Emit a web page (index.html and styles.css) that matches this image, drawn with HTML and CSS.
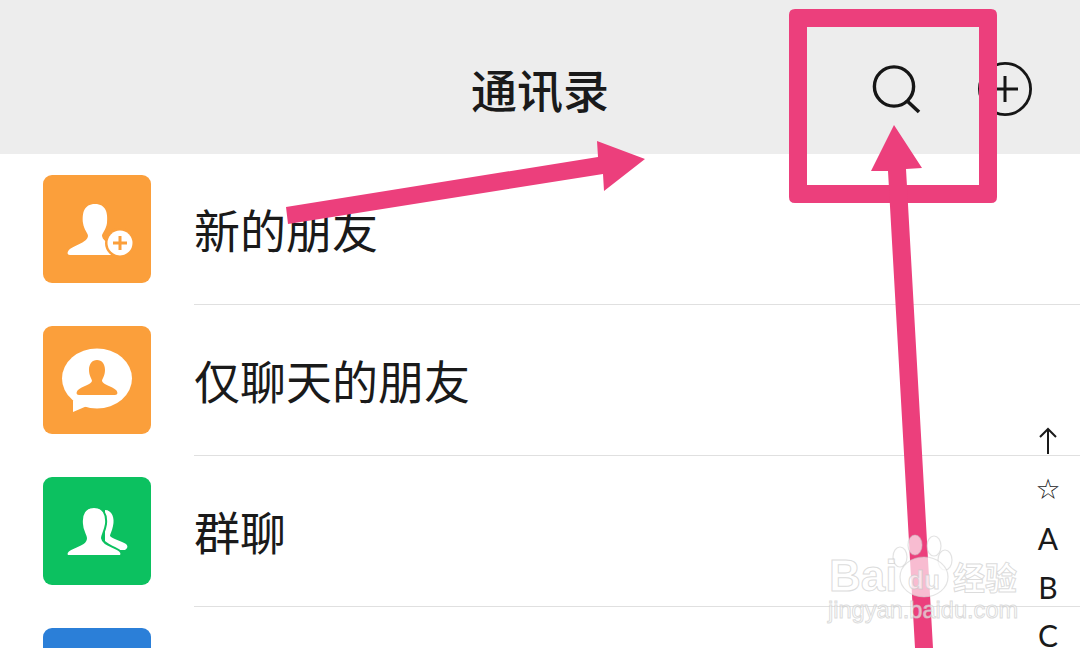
FILE: index.html
```html
<!DOCTYPE html>
<html lang="zh-CN">
<head>
    <meta charset="utf-8">
    <title>通讯录</title>
    <link rel="stylesheet" href="styles.css">
</head>
<body>
    <div class="header">
        <div class="headerSide"></div>
        <div class="title">通讯录</div>
        <div class="headerSide headerActions">
            <svg class="searchIcon" width="50" height="50" viewBox="0 0 50 50">
                <circle cx="23" cy="22.5" r="19.6" fill="none" stroke="#161616" stroke-width="3.4"/>
                <path d="M37 37.7 L48 48" fill="none" stroke="#161616" stroke-width="3.6"/>
            </svg>
            <svg class="plusIcon" width="56" height="56" viewBox="0 0 56 56">
                <circle cx="28" cy="28" r="25.6" fill="none" stroke="#161616" stroke-width="2.8"/>
                <path d="M28 15 V41 M15 28 H41" fill="none" stroke="#161616" stroke-width="3"/>
            </svg>
        </div>
    </div>

    <div class="list">
        <div class="row">
            <svg class="rowIcon" width="108" height="108" viewBox="0 0 108 108">
                <rect width="108" height="108" rx="9" fill="#fb9f3b"/>
                <path d="M27 80 C24 80 24 77 26 75 C31 70 44 68 45 61 C45 58 41 55 40 48 C39 38 41 29 52 29 C63 29 65 38 64 48 C63 55 59 58 59 61 C60 68 73 71 78 75 C80 77 80 80 77 80 Z" fill="#fff"/>
                <circle cx="77" cy="68" r="15" fill="#fb9f3b"/>
                <circle cx="77" cy="68" r="12.5" fill="#fff"/>
                <path d="M77 61 V75 M70 68 H84" fill="none" stroke="#fb9f3b" stroke-width="3"/>
            </svg>
            <div class="rowText">新的朋友</div>
        </div>
        <div class="row">
            <svg class="rowIcon" width="108" height="108" viewBox="0 0 108 108">
                <rect width="108" height="108" rx="9" fill="#fb9f3b"/>
                <path d="M30 86 L30 74 L44 80 Z" fill="#fff"/>
                <ellipse cx="54" cy="52.5" rx="35" ry="30" fill="#fff"/>
                <path d="M36 69 C33 69 33 66 35 64 C39 60 48 59 49 55 C49 53 46 50 46 44 C46 38 49 34 54 34 C59 34 62 38 62 44 C62 50 59 53 59 55 C60 59 69 60 73 64 C75 66 75 69 72 69 Z" fill="#fb9f3b"/>
            </svg>
            <div class="rowText">仅聊天的朋友</div>
        </div>
        <div class="row">
            <svg class="rowIcon" width="108" height="108" viewBox="0 0 108 108">
                <rect width="108" height="108" rx="9" fill="#0cc160"/>
                <path d="M62 33 C69 33 72 41 70 49 C69 54 67 57 67 59 C69 62 79 64 83 67 C85 69 85 71 82 73 L62 73 Z" fill="#fff"/>
                <path d="M26 79 C23 79 23 76 25 74 C31 69 43 68 43 61 C43 58 39 54 39 47 C38 37 42 30 51 30 C60 30 64 37 63 47 C62 54 59 58 59 61 C60 68 71 69 77 74 C79 76 79 79 76 79 Z" fill="#fff" stroke="#0cc160" stroke-width="2"/>
            </svg>
            <div class="rowText">群聊</div>
        </div>
        <div class="row">
            <svg class="rowIcon" width="108" height="108" viewBox="0 0 108 108">
                <rect width="108" height="108" rx="9" fill="#2b7fd8"/>
            </svg>
            <div class="rowText"></div>
        </div>
    </div>

    <div class="letterIndex">
        <div class="indexItem">
            <svg width="20" height="28" viewBox="0 0 20 28">
                <path d="M10 27 V2 M2 10 L10 2 L18 10" fill="none" stroke="#1a1a1a" stroke-width="2"/>
            </svg>
        </div>
        <div class="indexItem star">☆</div>
        <div class="indexItem">A</div>
        <div class="indexItem">B</div>
        <div class="indexItem">C</div>
    </div>

    <svg class="marks" width="1080" height="648" viewBox="0 0 1080 648">
        <path fill="#ec3f7c" fill-rule="evenodd" d="M795 9 H991 Q997 9 997 15 V197 Q997 203 991 203 H795 Q789 203 789 197 V15 Q789 9 795 9 Z M807 27 V185 H979 V27 Z"/>
        <path fill="#ec3f7c" d="M286 207 L598 157 L597 141 L645 159 L604 191 L603 174 L288 224 Z"/>
        <path fill="#ec3f7c" d="M894 125 L922 168 L906 169 L933 648 L915 648 L888 171 L871 171 Z"/>
    </svg>

    <div class="watermark">
        <svg class="paw" width="1080" height="648" viewBox="0 0 1080 648">
            <g fill="#fff" fill-opacity="0.65" stroke="#c8c8c8" stroke-opacity="0.5" stroke-width="1.2">
                <ellipse cx="915" cy="545" rx="7" ry="10"/>
                <ellipse cx="934" cy="546" rx="7" ry="10"/>
                <ellipse cx="900" cy="557" rx="7" ry="10"/>
                <ellipse cx="945" cy="560" rx="7" ry="10"/>
                <ellipse cx="924" cy="577" rx="24" ry="20"/>
            </g>
        </svg>
        <span class="wmBai">Bai</span>
        <span class="wmDu">du</span>
        <span class="wmJy">经验</span>
        <span class="wmUrl">jingyan.baidu.com</span>
    </div>
</body>
</html>
```

FILE: styles.css
```css
body {
    margin: 0;
    width: 1080px;
    height: 648px;
    overflow: hidden;
    position: relative;
    background-color: #fff;
    color: #1a1a1a;
    font-family: "Noto Sans CJK SC", "Noto Sans", sans-serif;
}

.header {
    box-sizing: border-box;
    height: 154px;
    padding-top: 22px;
    background-color: #ededed;
    display: grid;
    grid-template-columns: 1fr auto 1fr;
    align-items: center;
}

.title {
    font-size: 46px;
    font-weight: 500;
    line-height: 60px;
}

.headerActions {
    display: flex;
    justify-content: flex-end;
    align-items: center;
    gap: 56px;
    padding-right: 47px;
    margin-top: 2px;
}

.list {
    display: flex;
    flex-direction: column;
}

.row {
    height: 151px;
    display: flex;
    flex-shrink: 0;
    gap: 43px;
    padding-left: 43px;
}

.rowIcon {
    margin-top: 21px;
    flex-shrink: 0;
}

.rowText {
    flex: 1;
    height: 150px;
    border-bottom: 1px solid #e0e0e0;
    font-size: 46px;
    line-height: 148px;
}

.letterIndex {
    position: absolute;
    top: 417px;
    right: 14px;
    width: 36px;
    display: flex;
    flex-direction: column;
    align-items: center;
    font-family: "Lato", sans-serif;
    font-size: 30px;
    color: #1a1a1a;
}

.indexItem {
    height: 48.6px;
    line-height: 48.6px;
    display: flex;
    align-items: center;
}

.star {
    font-family: "DejaVu Sans", sans-serif;
    font-size: 28px;
}

.marks {
    position: absolute;
    top: 0;
    left: 0;
}

.watermark {
    position: absolute;
    top: 0;
    left: 0;
    width: 1080px;
    height: 648px;
}

.paw {
    position: absolute;
    top: 0;
    left: 0;
}

.watermark span {
    position: absolute;
    color: rgba(255, 255, 255, 0.6);
    -webkit-text-stroke: 1px rgba(200, 200, 200, 0.65);
    white-space: nowrap;
    font-family: "Liberation Sans", sans-serif;
}

.wmBai {
    left: 829px;
    top: 551px;
    font-size: 44px;
    font-weight: 700;
}

.wmDu {
    left: 908px;
    top: 565px;
    font-size: 26px;
    font-weight: 700;
}

.watermark .wmJy {
    left: 953px;
    top: 553px;
    font-size: 32px;
    font-family: "Noto Sans CJK SC", sans-serif;
    font-weight: 700;
}

.wmUrl {
    left: 828px;
    top: 597px;
    font-size: 23.6px;
}
```
